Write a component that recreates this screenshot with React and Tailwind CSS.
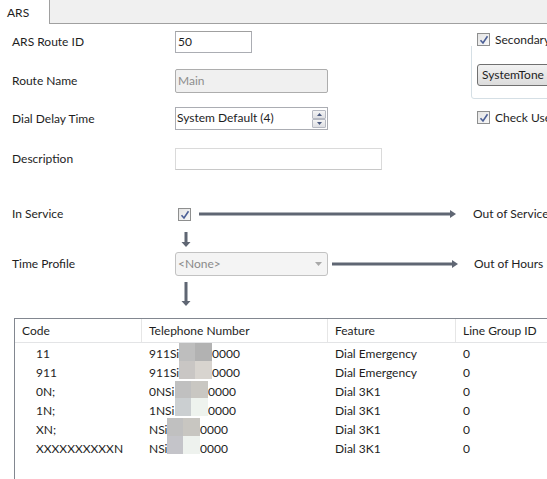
import React from 'react';

const Check = () => (
  <span className="relative inline-block w-[13px] h-[13px] border border-[#8e8f8f] bg-gradient-to-br from-[#e4e4e4] to-[#f7f7f7] shrink-0">
    <svg className="absolute left-[1px] top-[1px]" width="10" height="10" viewBox="0 0 10 10">
      <path d="M1.5 5.2 L4 8 L8.5 1.2" fill="none" stroke="#4b5f96" strokeWidth="1.6" />
    </svg>
  </span>
);

const ArrowRight = ({ w }) => (
  <svg width={w} height="10" viewBox={`0 0 ${w} 10`} className="block shrink-0">
    <rect x="0" y="3.5" width={w - 5} height="3" fill="#5f6673" />
    <path d={`M${w - 6} 1 L${w} 5 L${w - 6} 9 Z`} fill="#5f6673" />
  </svg>
);

const ArrowDown = ({ h }) => (
  <svg width="10" height={h} viewBox={`0 0 10 ${h}`} className="block">
    <rect x="3.5" y="0" width="3" height={h - 4} fill="#5f6673" />
    <path d={`M0.5 ${h - 5} L5 ${h} L9.5 ${h - 5} Z`} fill="#5f6673" />
  </svg>
);

const rows = [
  ['11', '911Si', 63, 'Dial Emergency'],
  ['911', '911Si', 63, 'Dial Emergency'],
  ['0N;', '0NSi', 59, 'Dial 3K1'],
  ['1N;', '1NSi', 59, 'Dial 3K1'],
  ['XN;', 'NSi', 51, 'Dial 3K1'],
  ['XXXXXXXXXXN', 'NSi', 51, 'Dial 3K1'],
];

export default function App() {
  return (
    <div className="w-[547px] h-[479px] bg-white overflow-hidden text-[12px] text-[#1e1e1e] whitespace-nowrap" style={{ fontFamily: 'Lato, "Open Sans", sans-serif' }}>
      {/* Tab strip */}
      <div className="flex h-[24px]">
        <div className="w-[49px] shrink-0 bg-white pl-[7px] pt-[4px]">ARS</div>
        <div className="flex-1 bg-[#f0f0f0] border-l border-b border-[#a0a0a0]"></div>
      </div>

      {/* Top fields */}
      <div className="flex">
        <div className="w-[471px] shrink-0 flex flex-col">
          <div className="flex items-center h-[22px] mt-[7px]">
            <span className="w-[175px] shrink-0 pl-[12px]">ARS Route ID</span>
            <div className="w-[77px] shrink-0 h-[22px] border border-[#abadb3] border-t-[#a0a0a0] pl-[2px] flex items-center">50</div>
          </div>
          <div className="flex items-center h-[24px] mt-[16px]">
            <span className="w-[175px] shrink-0 pl-[12px]">Route Name</span>
            <div className="w-[153px] shrink-0 h-[24px] border border-[#adadad] rounded-[2px] bg-[#f0f0f0] text-[#8d8d8d] pl-[2px] flex items-center">Main</div>
          </div>
          <div className="flex items-center h-[23px] mt-[14px]">
            <span className="w-[175px] shrink-0 pl-[12px]">Dial Delay Time</span>
            <div className="w-[153px] shrink-0 h-[23px] border border-[#abadb3] pl-[1px] flex items-center justify-between">
              <span className="-mt-[2px]">System Default (4)</span>
              <div className="flex flex-col w-[14px] h-[18px] mr-[1px]">
                <div className="h-[9px] border border-[#b6b9c2] rounded-[1px] bg-gradient-to-b from-[#f4f4f4] to-[#dedfe3] flex items-center justify-center">
                  <svg width="5" height="3" viewBox="0 0 5 3"><path d="M0 3 L2.5 0 L5 3 Z" fill="#4b5a80" /></svg>
                </div>
                <div className="h-[9px] border border-[#b6b9c2] rounded-[1px] bg-gradient-to-b from-[#f4f4f4] to-[#dedfe3] flex items-center justify-center">
                  <svg width="5" height="3" viewBox="0 0 5 3"><path d="M0 0 L2.5 3 L5 0 Z" fill="#4b5a80" /></svg>
                </div>
              </div>
            </div>
          </div>
          <div className="flex items-center h-[22px] mt-[18px]">
            <span className="w-[175px] shrink-0 pl-[12px]">Description</span>
            <div className="w-[207px] shrink-0 h-[22px] border border-[#dadada] border-b-[#c8c8c8]"></div>
          </div>
        </div>

        {/* Right column */}
        <div className="w-[76px] shrink-0 pt-[9px]">
          <div className="relative">
            <div className="flex items-center h-[13px] gap-[5px] pl-[6px] bg-white relative z-10 w-fit pr-[2px]">
              <Check />
              <span>Secondary</span>
            </div>
            <div className="absolute left-0 top-[7px] w-[90px] h-[59px] border border-[#d5dfe5] rounded-[3px]"></div>
            <div className="relative z-10 mt-[18px] ml-[6px] h-[22px] w-[80px] border border-[#707070] rounded-[3px] bg-gradient-to-b from-[#f2f2f2] to-[#dcdcdc] pl-[4px] flex items-center">SystemTone</div>
          </div>
          <div className="flex items-center h-[13px] gap-[5px] pl-[6px] mt-[25px]">
            <Check />
            <span>Check User</span>
          </div>
        </div>
      </div>

      {/* Routing flow */}
      <div className="flex items-center h-[14px] mt-[37px]">
        <span className="w-[178px] shrink-0 pl-[12px]">In Service</span>
        <Check />
        <div className="ml-[8px] shrink-0"><ArrowRight w={257} /></div>
        <span className="ml-[17px] shrink-0">Out of Service</span>
      </div>
      <div className="pl-[181px] mt-[11px]">
        <ArrowDown h={15} />
      </div>
      <div className="flex items-center h-[24px] mt-[5px]">
        <span className="w-[175px] shrink-0 pl-[12px]">Time Profile</span>
        <div className="w-[153px] shrink-0 h-[24px] border border-[#c2c2c2] rounded-[3px] bg-[#f4f4f4] text-[#8a8a8a] pl-[2px] pr-[5px] flex items-center justify-between">
          <span>&lt;None&gt;</span>
          <svg width="7" height="4" viewBox="0 0 7 4"><path d="M0 0 L3.5 4 L7 0 Z" fill="#a8a8a8" /></svg>
        </div>
        <div className="ml-[4px] shrink-0"><ArrowRight w={126} /></div>
        <span className="ml-[16px] shrink-0">Out of Hours Route</span>
      </div>
      <div className="pl-[181px] mt-[6px]">
        <ArrowDown h={24} />
      </div>

      {/* Table */}
      <div className="ml-[14px] mt-[12px] w-[560px] h-[200px] border border-[#828790] bg-white">
        <div className="flex h-[24px] border-b border-[#e3e4e6]">
          <div className="w-[127px] shrink-0 pl-[7px] flex items-center border-r border-[#e6e6e6]">Code</div>
          <div className="w-[186px] shrink-0 pl-[7px] flex items-center border-r border-[#e6e6e6]">Telephone Number</div>
          <div className="w-[128px] shrink-0 pl-[7px] flex items-center border-r border-[#e6e6e6]">Feature</div>
          <div className="flex-1 pl-[7px] flex items-center">Line Group ID</div>
        </div>
        <div className="relative pt-[1px]">
          {rows.map((r, i) => (
            <div key={i} className="flex h-[19px] items-center">
              <div className="w-[128px] shrink-0 pl-[21px]">{r[0]}</div>
              <div className="w-[186px] shrink-0 pl-[6px] flex">
                <span className="inline-block overflow-hidden" style={{ width: r[2] }}>{r[1]}</span>
                <span>0000</span>
              </div>
              <div className="w-[128px] shrink-0 pl-[6px]">{r[3]}</div>
              <div className="pl-[6px]">0</div>
            </div>
          ))}
          {/* pixelated redaction blocks */}
          <div className="absolute left-[164px] top-[0px] grid grid-cols-[16px_17px] grid-rows-[18px_18px]">
            <div className="bg-[#bebebe]"></div>
            <div className="bg-[#b2b2b2]"></div>
            <div className="bg-[#c9c6c4]"></div>
            <div className="bg-[#d8d4cf]"></div>
          </div>
          <div className="absolute left-[160px] top-[38px] grid grid-cols-[16px_17px] grid-rows-[17px_18px]">
            <div className="bg-[#c0c0c0]"></div>
            <div className="bg-[#c9c7c2]"></div>
            <div className="bg-[#cbcfd1]"></div>
            <div className="bg-[#eef3ee]"></div>
          </div>
          <div className="absolute left-[152px] top-[75px] grid grid-cols-[16px_17px] grid-rows-[18px_18px]">
            <div className="bg-[#c0c0c0]"></div>
            <div className="bg-[#c8c6c1]"></div>
            <div className="bg-[#c4c4c9]"></div>
            <div className="bg-[#eef2ee]"></div>
          </div>
        </div>
      </div>
    </div>
  );
}
